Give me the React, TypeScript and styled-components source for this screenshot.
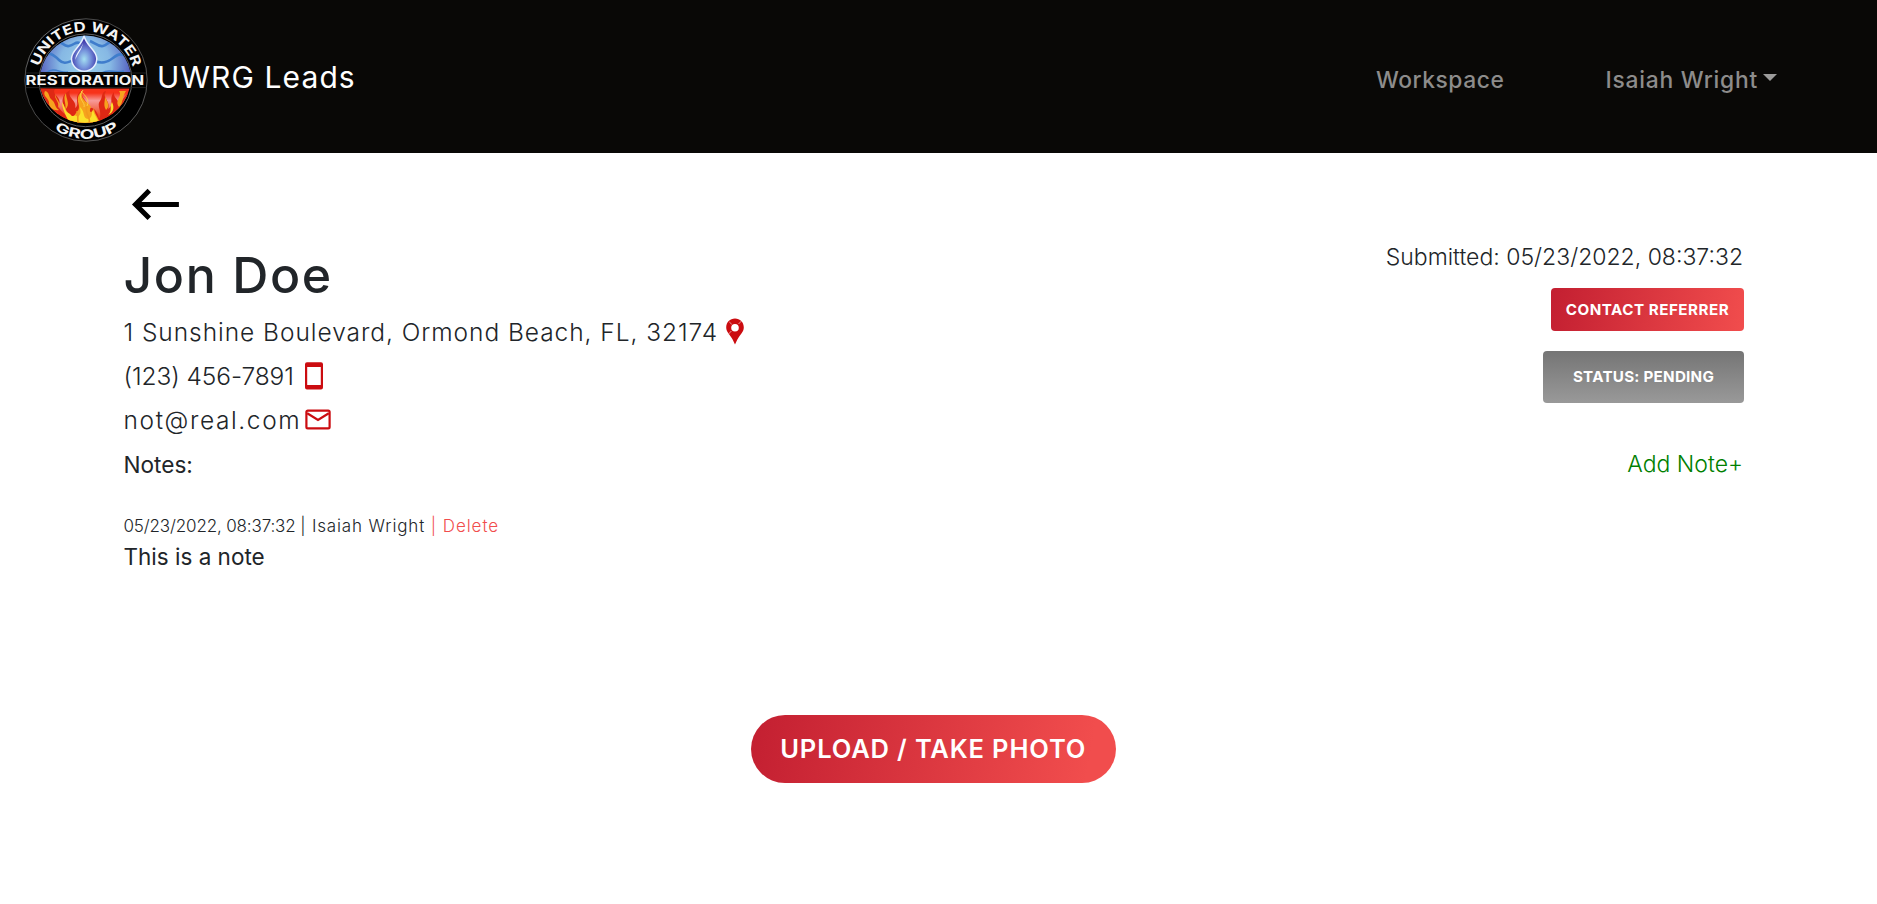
import styled, { createGlobalStyle } from 'styled-components';

const GlobalStyle = createGlobalStyle`
  * { box-sizing: border-box; }
  body {
    margin: 0;
    background: #fff;
    color: #212529;
    font-family: Inter, "Liberation Sans", sans-serif;
  }
  button { font-family: inherit; cursor: pointer; }
`;

const Header = styled.header`
  display: flex;
  align-items: center;
  height: 153px;
  padding: 0 100px 0 24px;
  background: #090806;
`;

const Brand = styled.a`
  display: flex;
  align-items: center;
  margin-right: auto;
  color: #fff;
  text-decoration: none;
`;

const LogoSvg = styled.svg`
  display: block;
  width: 124px;
  height: 124px;
  margin-top: 7px;
`;

const BrandName = styled.span`
  margin-left: 9px;
  font-size: 30px;
  letter-spacing: 1.1px;
  line-height: 36px;
`;

const Nav = styled.nav`
  display: flex;
  gap: 101px;
  margin-top: 7px;
`;

const NavItem = styled.a<{ $spacing: number }>`
  display: flex;
  align-items: center;
  color: #8d8c8b;
  font-size: 22.8px;
  font-weight: 500;
  line-height: 30px;
  letter-spacing: ${(p) => p.$spacing}px;
`;

const Caret = styled.span`
  width: 14px;
  margin: 0 0 5px 5px;
  border: 7px solid transparent;
  border-top-color: #9c9b9a;
  border-bottom: 0;
`;

const Main = styled.main`
  display: flex;
  flex-direction: column;
  padding: 30px 133px 0 123.500px;
`;

const BackButton = styled.button`
  display: block;
  width: 62px;
  height: 42px;
  padding: 0;
  border: 0;
  background: none;
  svg { display: block; }
`;

const Columns = styled.div`
  display: flex;
  justify-content: space-between;
  margin-top: 14.500px;
`;

const Details = styled.section`
  display: flex;
  flex-direction: column;
`;

const Name = styled.h1`
  height: 70px;
  margin: 0;
  font-size: 50px;
  font-weight: 450;
  line-height: 70px;
  letter-spacing: 1.6px;
`;

const ContactRow = styled.div<{ $spacing: number; $gap: number }>`
  display: flex;
  align-items: center;
  gap: ${(p) => p.$gap}px;
  height: 44px;
  font-size: 24.5px;
  font-weight: 330;
  letter-spacing: ${(p) => p.$spacing}px;
  svg { display: block; flex: none; }
`;

const Actions = styled.aside`
  display: flex;
  flex-direction: column;
  align-items: flex-end;
`;

const Submitted = styled.div`
  height: 48px;
  padding-right: 1px;
  font-size: 23px;
  font-weight: 350;
  line-height: 34px;
`;

const ContactButton = styled.button`
  width: 193px;
  height: 43px;
  padding: 0;
  border: 0;
  border-radius: 4px;
  background: linear-gradient(100deg, #c31f31, #f14d4d);
  color: #fff;
  font-size: 15.2px;
  font-weight: 650;
  letter-spacing: 0.5px;
  line-height: 39px;
`;

const StatusButton = styled(ContactButton)`
  width: 201px;
  height: 52px;
  margin-top: 20px;
  background: linear-gradient(#757575, #999);
  letter-spacing: 0.25px;
  line-height: 49px;
`;

const NotesHeader = styled.div`
  display: flex;
  align-items: center;
  justify-content: space-between;
  height: 45px;
  font-size: 22.6px;
  font-weight: 370;
`;

const AddNote = styled.a`
  padding-right: 1px;
  color: #008000;
  font-size: 23px;
  font-weight: 350;
`;

const Note = styled.article`
  margin-top: 25px;
`;

const NoteMeta = styled.div`
  display: flex;
  height: 28px;
  font-size: 17px;
  font-weight: 350;
  line-height: 28px;
  white-space: pre;
`;

const Stamp = styled.span`
  letter-spacing: -0.15px;
`;

const Author = styled.span`
  letter-spacing: 0.85px;
`;

const Delete = styled.span`
  color: #f14d4d;
  letter-spacing: 0.95px;
`;

const NoteText = styled.p`
  margin: 0;
  font-size: 22.5px;
  font-weight: 380;
  line-height: 34px;
`;

const UploadButton = styled.button`
  align-self: center;
  width: 365px;
  height: 68px;
  margin: 141px 1px 0 0;
  padding: 0;
  border: 0;
  border-radius: 34px;
  background: linear-gradient(100deg, #c31f31, #f14d4d 92%);
  color: #fff;
  font-size: 25.5px;
  font-weight: 580;
  letter-spacing: 0.85px;
  line-height: 65px;
`;

const Logo = () => (
  <LogoSvg viewBox="24 18 124 124">
    <defs>
      <radialGradient id="sky" gradientUnits="userSpaceOnUse" cx="85" cy="64" r="46">
        <stop offset="0" stopColor="#9ad0ea" />
        <stop offset="0.55" stopColor="#86b8e4" />
        <stop offset="1" stopColor="#5560c0" />
      </radialGradient>
      <radialGradient id="drop" cx="0.5" cy="0.66" r="0.55">
        <stop offset="0" stopColor="#a5e0f2" />
        <stop offset="0.45" stopColor="#7795dc" />
        <stop offset="1" stopColor="#3b30a6" />
      </radialGradient>
      <linearGradient id="fire" x1="0" y1="0" x2="0" y2="1">
        <stop offset="0" stopColor="#f7321a" />
        <stop offset="0.12" stopColor="#f7321a" />
        <stop offset="0.3" stopColor="#f79a98" />
        <stop offset="0.65" stopColor="#ef4a20" />
        <stop offset="1" stopColor="#e62a10" />
      </linearGradient>
      <linearGradient id="rim" x1="0" y1="0" x2="1" y2="1">
        <stop offset="0" stopColor="#b0b0b0" />
        <stop offset="0.3" stopColor="#565656" />
        <stop offset="1" stopColor="#777" />
      </linearGradient>
      <clipPath id="water"><path d="M40.5 72 A46 46 0 0 1 130.5 72Z" /></clipPath>
      <clipPath id="flame"><path d="M40.5 88.5 A46 46 0 0 0 129.5 88.5Z" /></clipPath>
      <path id="arcTop" d="M37.4 80 A48.6 48.6 0 0 1 134.6 80" />
      <path id="arcBottom" d="M27.2 80 A58.8 58.8 0 0 0 144.8 80" />
    </defs>
    <circle cx="86" cy="80" r="61.2" fill="#000" stroke="url(#rim)" strokeWidth="0.8" />
    <circle cx="85.5" cy="80.3" r="46.4" fill="#000" stroke="#777" strokeWidth="0.8" />
    <g clipPath="url(#water)">
      <rect x="36" y="32" width="100" height="42" fill="url(#sky)" />
      <g fill="none" stroke="#3f7dcc" strokeWidth="2.6">
        <path d="M57 42 C63 41 63 47 69 46 S75 41 80 43" />
        <path d="M90 41 C95 43 98 47 103 46 S108 41 114 41" />
        <path d="M40 57 C48 50 54 55 59 60 S68 62 74 60" />
        <path d="M95 61 C101 64 108 62 113 58 S121 52 132 59" />
        <path d="M46 73 C54 66 61 74 68 72" strokeWidth="1.6" />
        <path d="M102 73 C109 68 115 74 124 71" strokeWidth="1.6" />
      </g>
      <path d="M84 36 C81 47 71.500 50 71.500 58.500 A12.600 12.600 0 0 0 96.800 58.500 C96.800 50 87 47 84 36Z" fill="url(#drop)" stroke="#e6f0ff" strokeWidth="1.5" />
      <path d="M83 43 C81 50 75 53 75.5 60 C76.5 55 82 50 83 43Z" fill="#f2f6ff" />
    </g>
    <g clipPath="url(#flame)">
      <rect x="36" y="88" width="100" height="42" fill="url(#fire)" />
      <path d="M40 88 L55 89 C51 95 62 97 59 104 C57 109 64 112 68 118 C71 112 60 106 63 98 C64 93 68 92 70 90 C67 99 77 99 75 108 C81 105 72 97 82 90 C79 98 90 101 87 109 C93 105 98 112 99 119 C103 112 96 106 100 101 C103 97 101 92 106 91 C102 99 111 101 108 109 C115 105 108 99 114 92 C113 99 120 99 118 105 L131 89 V130 H40Z" fill="#df2814" />
      <g fill="#f6a21e">
        <path d="M45 91 C50 92 48 97 52 100 S54 107 59 110 C54 111 49 108 49 103 S42 96 45 91Z" />
        <path d="M55 94 C54 99 60 102 58 108 C63 104 56 100 55 94Z" />
        <path d="M66 93 C62 99 67 103 65 110 C71 104 66 100 66 93Z" />
        <path d="M104 93 C107 99 102 103 106 110 C112 105 105 100 104 93Z" />
        <path d="M119 91 C123 97 114 100 119 107 C124 102 121 99 126 91Z" />
        <path d="M82 91 C72 101 84 105 76 113 C72 118 72 125 82 127 H101 C100 119 94 114 94 108 C92 114 88 113 91 107 C88 101 80 101 82 91Z" />
      </g>
      <g fill="#fbe12b">
        <path d="M62 102 C66 108 64 111 70 114 C74 119 73 113 78 117 C82 113 80 111 80 107 C86 113 82 118 88 119 C93 118 91 113 93 110 C95 118 100 119 98 128 H70 C72 122 63 116 62 102Z" />
        <path d="M112 102 C109 107 113 110 108 115 C113 113 115 108 112 102Z" />
      </g>
      <path d="M77 111 C79 117 76 121 80 127 M87 106 C83 115 94 117 87 127" fill="none" stroke="#f19a1d" strokeWidth="1.6" />
      <path d="M83 90 C76 99 86 102 84 107 M81 91 C85 96 90 99 87 106" fill="none" stroke="#fbd24a" strokeWidth="0.9" />
    </g>
    <path d="M25.5 73 H146.5 M25.5 87.6 H146.5" stroke="#2a2a2a" strokeWidth="0.8" />
    <g fill="#f4f4f4" fontFamily='Inter, sans-serif' fontWeight="700">
      <text x="25.6" y="84.6" fontSize="13" textLength="118.500" lengthAdjust="spacingAndGlyphs">RESTORATION</text>
      <text fontSize="13.5">
        <textPath href="#arcTop" startOffset="13.5" textLength="126" lengthAdjust="spacingAndGlyphs">UNITED WATER</textPath>
      </text>
      <text fontSize="13">
        <textPath href="#arcBottom" startOffset="59" textLength="68" lengthAdjust="spacingAndGlyphs">GROUP</textPath>
      </text>
    </g>
  </LogoSvg>
);

const ArrowIcon = () => (
  <svg width="62" height="42" viewBox="0 0 62 42" fill="none" stroke="#000" strokeWidth="5">
    <path d="M54.9 21.4H12M25.300 7.6 L11.5 21.4 L25.300 35.2" />
  </svg>
);

const PinIcon = () => (
  <svg width="18" height="27" viewBox="0 0 18 27">
    <path fillRule="evenodd" fill="#cb0c10" d="M9 0.5C4 .5.2 4.3.2 9.3c0 4.6 3.5 7.4 5.5 10.7C7.300 22.600 8 24.400 9 26.500c1-2.100 1.700-3.900 3.300-6.500 2-3.300 5.500-6.100 5.500-10.700C17.800 4.300 14 .5 9 .5ZM9 6a3.800 3.800 0 1 1 0 7.600A3.800 3.800 0 0 1 9 6Z" />
    <path d="M5.400 13 L2.200 16.300 M12.500 6 L15.500 3 M5.800 6.300 L3.300 4" stroke="#f3b9ba" strokeWidth="0.8" />
  </svg>
);

const PhoneIcon = () => (
  <svg width="18" height="28" viewBox="0 0 18 28">
    <path fillRule="evenodd" fill="#cb0c10" d="M2 .2H16a2 2 0 0 1 2 2V25.600a2 2 0 0 1-2 2H2a2 2 0 0 1-2-2V2.200a2 2 0 0 1 2-2ZM2.200 5V23H15.800V5Z" />
  </svg>
);

const MailIcon = () => (
  <svg width="26" height="21" viewBox="0 0 26 21" fill="none" stroke="#cb0c10" strokeWidth="2.200">
    <rect x="1.400" y="1.600" width="23.200" height="17.800" rx="1.400" />
    <path d="M2.200 4.200 L13 11 L23.800 4.200" />
  </svg>
);

export default function App() {
  return (
    <>
      <GlobalStyle />
      <Header>
        <Brand>
          <Logo />
          <BrandName>UWRG Leads</BrandName>
        </Brand>
        <Nav>
          <NavItem $spacing={0.55}>Workspace</NavItem>
          <NavItem $spacing={0.78}>
            Isaiah Wright
            <Caret />
          </NavItem>
        </Nav>
      </Header>
      <Main>
        <BackButton aria-label="Back"><ArrowIcon /></BackButton>
        <Columns>
          <Details>
            <Name>Jon Doe</Name>
            <ContactRow $spacing={0.95} $gap={8}>
              1 Sunshine Boulevard, Ormond Beach, FL, 32174
              <PinIcon />
            </ContactRow>
            <ContactRow $spacing={-0.08} $gap={11}>
              (123) 456-7891
              <PhoneIcon />
            </ContactRow>
            <ContactRow $spacing={1.6} $gap={4}>
              not@real.com
              <MailIcon />
            </ContactRow>
          </Details>
          <Actions>
            <Submitted>Submitted: 05/23/2022, 08:37:32</Submitted>
            <ContactButton>CONTACT REFERRER</ContactButton>
            <StatusButton>STATUS: PENDING</StatusButton>
          </Actions>
        </Columns>
        <NotesHeader>
          <span>Notes:</span>
          <AddNote>Add Note+</AddNote>
        </NotesHeader>
        <Note>
          <NoteMeta>
            <Stamp>05/23/2022, 08:37:32 </Stamp>
            <Author>| Isaiah Wright </Author>
            <Delete>| Delete</Delete>
          </NoteMeta>
          <NoteText>This is a note</NoteText>
        </Note>
        <UploadButton>UPLOAD / TAKE PHOTO</UploadButton>
      </Main>
    </>
  );
}
